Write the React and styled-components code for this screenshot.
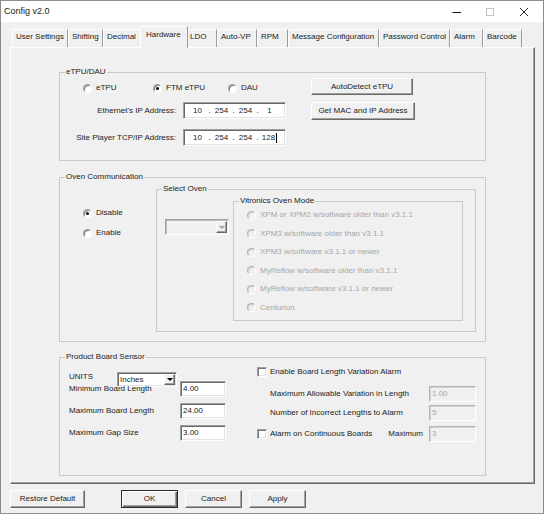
import React from "react";
import styled, { createGlobalStyle, css } from "styled-components";

const FONT = `"Liberation Sans", Arial, sans-serif`;

const GlobalStyle = createGlobalStyle`
  html, body { margin: 0; padding: 0; background: #f0f0f0; }
  body { font-family: ${FONT}; }
  *, *::before, *::after { box-sizing: border-box; }
`;

const Window = styled.div`
  width: 544px;
  height: 514px;
  border: 1px solid #8c8c8c;
  background: #f0f0f0;
  display: flex;
  flex-direction: column;
  font-family: ${FONT};
  font-size: 8px;
  line-height: 10px;
  color: #222;
  overflow: hidden;
`;

const TitleBar = styled.div`
  height: 21px;
  flex-shrink: 0;
  background: #fff;
  display: flex;
  align-items: center;
  justify-content: space-between;
  padding-left: 3px;
`;

const Title = styled.span`
  font-size: 9px;
  line-height: 11px;
  color: #222;
`;

const Captions = styled.div`
  display: flex;
  height: 100%;
  margin-right: 2px;
`;

const CaptionButton = styled.div`
  width: ${(p) => p.$w || 34}px;
  height: 100%;
  display: flex;
  align-items: center;
  justify-content: center;
`;

const Body = styled.div`
  flex: 1;
  display: flex;
  flex-direction: column;
  padding: 4px 8px 0 9px;
`;

const TabStrip = styled.div`
  display: flex;
  align-items: flex-end;
  height: 21px;
  padding-left: 2px;
  position: relative;
  z-index: 1;
`;

const Tab = styled.div`
  flex-shrink: 0;
  width: ${(p) => p.$w}px;
  height: 18px;
  padding: 2px 0 0 3px;
  border-top: 1px solid #fff;
  border-left: 1px solid #fff;
  border-right: 1px solid #9a9a9a;
  white-space: nowrap;
  line-height: 10px;
  ${(p) =>
    p.$active &&
    css`
      width: ${p.$w + 4}px;
      height: 22px;
      margin: 0 -2px -1px -2px;
      padding: 3px 0 0 5px;
      background: #f0f0f0;
      position: relative;
      z-index: 2;
    `}
`;

const Panel = styled.div`
  height: 437px;
  flex-shrink: 0;
  border-top: 1px solid #fff;
  border-left: 1px solid #fff;
  border-right: 1px solid #696969;
  border-bottom: 1px solid #696969;
  box-shadow: inset -1px -1px 0 #a0a0a0;
  padding: 19px 0 0 48px;
  display: flex;
  flex-direction: column;
`;

const GroupBox = styled.fieldset`
  margin: ${(p) => p.$mt || 0}px 0 0 ${(p) => p.$ml || 0}px;
  padding: 0;
  min-width: 0;
  flex-shrink: 0;
  border: 1px solid #c9c9c9;
  width: ${(p) => p.$w}px;
  height: ${(p) => p.$h}px;
`;

const Legend = styled.legend`
  margin-left: 5px;
  padding: 0 1px;
  font-size: 8px;
  line-height: 10px;
  color: #222;
`;

/* ---------- controls ---------- */

const sunken = css`
  border: 1px solid;
  border-color: #a0a0a0 #fff #fff #a0a0a0;
  box-shadow: inset 1px 1px 0 #696969, inset -1px -1px 0 #e3e3e3;
`;

const raised = css`
  border: 1px solid;
  border-color: #fff #696969 #696969 #fff;
  box-shadow: inset -1px -1px 0 #a0a0a0;
`;

const Button = styled.button`
  width: ${(p) => p.$w}px;
  height: ${(p) => p.$h}px;
  margin-left: ${(p) => p.$ml || 0}px;
  flex-shrink: 0;
  padding: 0;
  font-family: ${FONT};
  font-size: 8px;
  line-height: 10px;
  color: #222;
  background: #f0f0f0;
  ${raised}
  ${(p) =>
    p.$default &&
    css`
      border: 1px solid #2a2a2a;
      box-shadow: inset 1px 1px 0 #fff, inset -1px -1px 0 #696969,
        inset -2px -2px 0 #a0a0a0;
    `}
`;

const RadioItem = styled.label`
  display: flex;
  align-items: center;
  gap: 4px;
  height: ${(p) => p.$h || 10}px;
  width: ${(p) => (p.$w ? `${p.$w}px` : "auto")};
  flex-shrink: 0;
  white-space: nowrap;
  color: ${(p) => (p.$disabled ? "#a7a7a7" : "#222")};
`;

const RadioCircle = styled.span`
  width: 9px;
  height: 9px;
  flex-shrink: 0;
  border-radius: 50%;
  position: relative;
  border: 1px solid;
  background: ${(p) => (p.$disabled ? "#f0f0f0" : "#fff")};
  border-color: ${(p) =>
    p.$disabled ? "#b0b0b0 #fff #fff #b0b0b0" : "#a0a0a0 #fff #fff #a0a0a0"};
  box-shadow: ${(p) =>
    p.$disabled ? "inset 1px 1px 0 #d4d4d4" : "inset 1px 1px 0 #7a7a7a"};
  ${(p) =>
    p.$checked &&
    css`
      &::after {
        content: "";
        position: absolute;
        left: 2px;
        top: 2px;
        width: 3px;
        height: 3px;
        border-radius: 50%;
        background: #000;
      }
    `}
`;

const Radio = ({ children, checked, disabled, w, h }) => (
  <RadioItem $w={w} $h={h} $disabled={disabled}>
    <RadioCircle $checked={checked} $disabled={disabled} />
    {children}
  </RadioItem>
);

const CheckBox = styled.span`
  width: 10px;
  height: 10px;
  flex-shrink: 0;
  background: #fff;
  border: 1px solid;
  border-color: #a0a0a0 #fff #fff #a0a0a0;
  box-shadow: inset 1px 1px 0 #7a7a7a, inset -1px -1px 0 #e3e3e3;
`;

const TextBox = styled.div`
  width: ${(p) => p.$w}px;
  height: ${(p) => p.$h || 16}px;
  flex-shrink: 0;
  padding: 0 0 0 2px;
  display: flex;
  align-items: center;
  background: ${(p) => (p.$disabled ? "#f0f0f0" : "#fff")};
  color: ${(p) => (p.$disabled ? "#a7a7a7" : "#222")};
  ${sunken}
  ${(p) =>
    p.$disabled &&
    css`
      border-color: #b4b4b4 #fff #fff #b4b4b4;
      box-shadow: inset 1px 1px 0 #d2d2d2;
    `}
`;

const ComboBox = styled.div`
  width: ${(p) => p.$w}px;
  height: ${(p) => p.$h}px;
  margin-top: ${(p) => p.$mt || 0}px;
  flex-shrink: 0;
  display: flex;
  padding: 1px;
  background: ${(p) => (p.$disabled ? "#f0f0f0" : "#fff")};
  ${sunken}
  ${(p) => p.$disabled && css`box-shadow: inset 1px 1px 0 #bdbdbd;`}
`;

const ComboText = styled.span`
  flex: 1;
  padding-left: 1px;
  display: flex;
  align-items: center;
`;

const ComboButton = styled.span`
  width: 11px;
  flex-shrink: 0;
  display: flex;
  align-items: center;
  justify-content: center;
  background: #f0f0f0;
  ${raised}
  &::after {
    content: "";
    border-left: 3px solid transparent;
    border-right: 3px solid transparent;
    border-top: 3px solid ${(p) => (p.$disabled ? "#a0a0a0" : "#000")};
  }
`;

const Combo = ({ value, disabled, w, h, mt }) => (
  <ComboBox $w={w} $h={h} $mt={mt} $disabled={disabled}>
    <ComboText>{value}</ComboText>
    <ComboButton $disabled={disabled} />
  </ComboBox>
);

/* ---------- eTPU / DAU ---------- */

const EtpuBody = styled.div`
  display: flex;
  padding-top: 1px;
`;

const EtpuLeft = styled.div`
  width: 226px;
  flex-shrink: 0;
  padding-top: 5px;
  display: flex;
  flex-direction: column;
`;

const RadioRow = styled.div`
  display: flex;
  margin-left: 23px;
`;

const IpRow = styled.div`
  display: flex;
  align-items: center;
  margin-top: ${(p) => p.$mt}px;
`;

const FieldLabel = styled.span`
  width: ${(p) => p.$w}px;
  flex-shrink: 0;
  text-align: ${(p) => p.$align || "left"};
  margin-right: ${(p) => p.$mr || 0}px;
  margin-left: ${(p) => p.$ml || 0}px;
  white-space: nowrap;
`;

const IpBox = styled.div`
  width: 103px;
  height: 17px;
  flex-shrink: 0;
  display: flex;
  align-items: center;
  padding-left: 5px;
  background: #fff;
  ${sunken}
`;

const Octet = styled.span`
  width: 17px;
  text-align: center;
  white-space: nowrap;
`;

const Dot = styled.span`
  width: 7px;
  text-align: center;
`;

const Caret = styled.span`
  display: inline-block;
  width: 1px;
  height: 10px;
  background: #000;
  vertical-align: top;
  margin-left: 1px;
`;

const ButtonColumn = styled.div`
  display: flex;
  flex-direction: column;
  gap: 7px;
  margin-left: 25px;
`;

const IpAddress = ({ parts, caret }) => (
  <IpBox>
    {parts.map((p, i) => (
      <React.Fragment key={i}>
        <Octet>
          {p}
          {caret && i === parts.length - 1 && <Caret />}
        </Octet>
        {i < parts.length - 1 && <Dot>.</Dot>}
      </React.Fragment>
    ))}
  </IpBox>
);

/* ---------- Oven ---------- */

const OvenBody = styled.div`
  display: flex;
`;

const OvenLeft = styled.div`
  width: 96px;
  flex-shrink: 0;
  padding: 26px 0 0 23px;
  display: flex;
  flex-direction: column;
  gap: 10px;
`;

const SelectBody = styled.div`
  display: flex;
  padding-left: 8px;
`;

const VitBody = styled.div`
  display: flex;
  flex-direction: column;
  padding-left: 13px;
`;

/* ---------- Product ---------- */

const ProductBody = styled.div`
  display: flex;
`;

const ProductLeft = styled.div`
  width: 197px;
  flex-shrink: 0;
  padding-top: 10px;
  display: flex;
  flex-direction: column;
`;

const UnitsRow = styled.div`
  display: flex;
  align-items: flex-start;
  height: 15px;
  margin-bottom: -6px;
`;

const FormRow = styled.div`
  display: flex;
  align-items: center;
  height: ${(p) => p.$h || 16}px;
  margin-top: ${(p) => p.$mt || 0}px;
`;

const ProductRight = styled.div`
  width: 219px;
  flex-shrink: 0;
  padding-top: 5px;
  display: flex;
  flex-direction: column;
`;

const RowText = styled.span`
  flex: 1;
  white-space: nowrap;
  padding-left: ${(p) => p.$pl || 0}px;
`;

const SmallText = styled.span`
  margin-right: 6px;
  white-space: nowrap;
`;

const Footer = styled.div`
  display: flex;
  margin-top: 6px;
`;

/* ---------- data ---------- */

const tabs = [
  { label: "User Settings", w: 56 },
  { label: "Shifting", w: 35 },
  { label: "Decimal", w: 39 },
  { label: "Hardware", w: 44, active: true },
  { label: "LDO", w: 31 },
  { label: "Auto-VP", w: 40 },
  { label: "RPM", w: 31 },
  { label: "Message Configuration", w: 91 },
  { label: "Password Control", w: 71 },
  { label: "Alarm", w: 33 },
  { label: "Barcode", w: 39 },
];

const ovenModes = [
  "XPM or XPM2 w/software older than v3.1.1",
  "XPM3 w/software older than v3.1.1",
  "XPM3 w/software v3.1.1 or newer",
  "MyReflow w/software older than v3.1.1",
  "MyReflow w/software v3.1.1 or newer",
  "Centurion",
];

const boardFields = [
  { label: "Minimum Board Length", value: "4.00" },
  { label: "Maximum Board Length", value: "24.00" },
  { label: "Maximum Gap Size", value: "3.00" },
];

export default function App() {
  return (
    <>
      <GlobalStyle />
      <Window>
        <TitleBar>
          <Title>Config v2.0</Title>
          <Captions>
            <CaptionButton $w={32}>
              <svg width="10" height="10" viewBox="0 0 10 10">
                <line x1="0.5" y1="5.5" x2="9" y2="5.5" stroke="#111" strokeWidth="1" />
              </svg>
            </CaptionButton>
            <CaptionButton>
              <svg width="10" height="10" viewBox="0 0 10 10">
                <rect x="1.5" y="1.5" width="7" height="7" fill="none" stroke="#c4c4c4" strokeWidth="1" />
              </svg>
            </CaptionButton>
            <CaptionButton>
              <svg width="10" height="10" viewBox="0 0 10 10">
                <path d="M1 1 L9 9 M9 1 L1 9" stroke="#111" strokeWidth="0.9" fill="none" />
              </svg>
            </CaptionButton>
          </Captions>
        </TitleBar>

        <Body>
          <TabStrip>
            {tabs.map((t) => (
              <Tab key={t.label} $w={t.w} $active={t.active}>
                {t.label}
              </Tab>
            ))}
          </TabStrip>

          <Panel>
            <GroupBox $w={427} $h={94}>
              <Legend>eTPU/DAU</Legend>
              <EtpuBody>
                <EtpuLeft>
                  <RadioRow>
                    <Radio w={70}>eTPU</Radio>
                    <Radio w={75} checked>
                      FTM eTPU
                    </Radio>
                    <Radio>DAU</Radio>
                  </RadioRow>
                  <IpRow $mt={9}>
                    <FieldLabel $w={116} $align="right" $mr={7}>
                      Ethernet's IP Address:
                    </FieldLabel>
                    <IpAddress parts={["10", "254", "254", "1"]} />
                  </IpRow>
                  <IpRow $mt={10}>
                    <FieldLabel $w={116} $align="right" $mr={7}>
                      Site Player TCP/IP Address:
                    </FieldLabel>
                    <IpAddress parts={["10", "254", "254", "128"]} caret />
                  </IpRow>
                </EtpuLeft>
                <ButtonColumn>
                  <Button $w={102} $h={17}>AutoDetect eTPU</Button>
                  <Button $w={104} $h={18}>Get MAC and IP Address</Button>
                </ButtonColumn>
              </EtpuBody>
            </GroupBox>

            <GroupBox $w={427} $h={170} $mt={11}>
              <Legend>Oven Communication</Legend>
              <OvenBody>
                <OvenLeft>
                  <Radio checked>Disable</Radio>
                  <Radio>Enable</Radio>
                </OvenLeft>
                <GroupBox $w={320} $h={148} $mt={2}>
                  <Legend>Select Oven</Legend>
                  <SelectBody>
                    <Combo disabled w={64} h={16} mt={25} value="" />
                    <GroupBox $w={230} $h={125} $mt={2} $ml={4}>
                      <Legend>Vitronics Oven Mode</Legend>
                      <VitBody>
                        {ovenModes.map((m) => (
                          <Radio key={m} disabled h={18.5}>
                            {m}
                          </Radio>
                        ))}
                      </VitBody>
                    </GroupBox>
                  </SelectBody>
                </GroupBox>
              </OvenBody>
            </GroupBox>

            <GroupBox $w={427} $h={124} $mt={10}>
              <Legend>Product Board Sensor</Legend>
              <ProductBody>
                <ProductLeft>
                  <UnitsRow>
                    <FieldLabel $w={48} $ml={9}>
                      UNITS
                    </FieldLabel>
                    <Combo w={60} h={15} value="Inches" />
                  </UnitsRow>
                  {boardFields.map((f, i) => (
                    <FormRow key={f.label} $mt={i === 0 ? 0 : 6}>
                      <FieldLabel $w={111} $ml={9}>
                        {f.label}
                      </FieldLabel>
                      <TextBox $w={46}>{f.value}</TextBox>
                    </FormRow>
                  ))}
                </ProductLeft>
                <ProductRight>
                  <FormRow $h={10}>
                    <CheckBox />
                    <RowText $pl={3}>Enable Board Length Variation Alarm</RowText>
                  </FormRow>
                  <FormRow $mt={9}>
                    <RowText $pl={13}>Maximum Allowable Variation in Length</RowText>
                    <TextBox $w={47} $disabled>
                      1.00
                    </TextBox>
                  </FormRow>
                  <FormRow $mt={3}>
                    <RowText $pl={13}>Number of Incorrect Lengths to Alarm</RowText>
                    <TextBox $w={47} $disabled>
                      5
                    </TextBox>
                  </FormRow>
                  <FormRow $mt={5}>
                    <CheckBox />
                    <RowText $pl={3}>Alarm on Continuous Boards</RowText>
                    <SmallText>Maximum</SmallText>
                    <TextBox $w={47} $disabled>
                      3
                    </TextBox>
                  </FormRow>
                </ProductRight>
              </ProductBody>
            </GroupBox>
          </Panel>

          <Footer>
            <Button $w={75} $h={18}>Restore Default</Button>
            <Button $w={57} $h={18} $ml={36} $default>
              OK
            </Button>
            <Button $w={57} $h={18} $ml={7}>Cancel</Button>
            <Button $w={57} $h={18} $ml={7}>Apply</Button>
          </Footer>
        </Body>
      </Window>
    </>
  );
}
